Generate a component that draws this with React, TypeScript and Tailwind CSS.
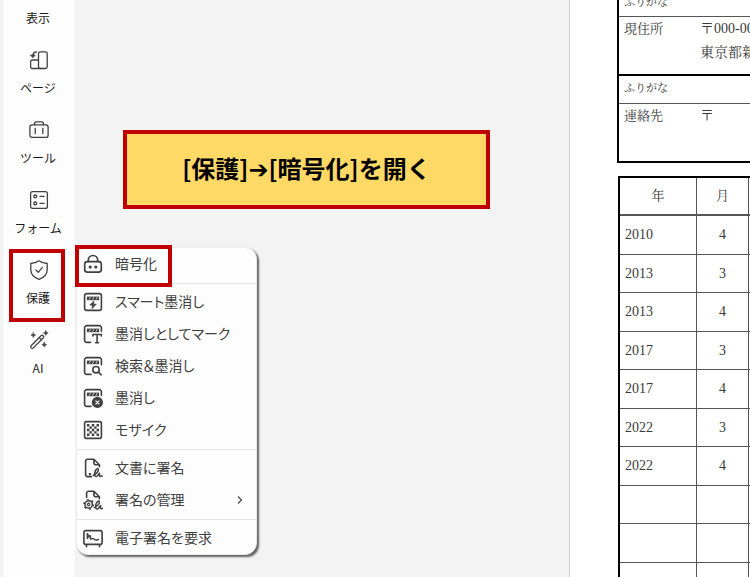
import type { ReactNode } from "react";

/* ---------- icon frames ---------- */

function Icon({ children, weight = 1.3 }: { children: ReactNode; weight?: number }) {
  return (
    <svg
      aria-hidden="true"
      className="size-5 shrink-0"
      viewBox="0 0 20 20"
      fill="none"
      stroke="currentColor"
      strokeWidth={weight}
      strokeLinecap="round"
      strokeLinejoin="round"
    >
      {children}
    </svg>
  );
}

const PageIcon = () => (
  <Icon>
    <rect x="9.5" y="1.8" width="8.7" height="16.7" rx="1.8" />
    <path d="M9.5 10H3.4a1.8 1.8 0 0 0-1.8 1.8v4.9a1.8 1.8 0 0 0 1.800 1.800h7.900" />
    <path d="M7.400 2C5.300 2 3.900 3.200 3.900 6" />
    <path d="M1.800 5h4.400L4 7.600Z" fill="currentColor" strokeWidth="0.8" />
  </Icon>
);

const ToolIcon = () => (
  <Icon>
    <rect x="0.9" y="4.8" width="18.2" height="12.6" rx="2.2" />
    <path d="M5.6 4.8V3.4a1.6 1.6 0 0 1 1.6-1.6h5.6a1.6 1.6 0 0 1 1.6 1.6v1.4M6.2 8.5v5M13.8 8.5v5" />
  </Icon>
);

const FormIcon = () => (
  <Icon>
    <rect x="1.6" y="1.6" width="16.8" height="16.8" rx="2" />
    <circle cx="6.2" cy="6.4" r="1.4" />
    <circle cx="6.2" cy="13.4" r="1.4" />
    <path d="M11 6.4h4M11 13.4h4" />
  </Icon>
);

const ShieldIcon = () => (
  <Icon>
    <path d="M10 .8c2.2 1.700 5 2.600 8.200 2.700v6.200c0 4.400-3 7.700-8.200 9.700-5.200-2-8.200-5.300-8.200-9.700V3.500C5 3.400 7.800 2.500 10 .8Z" />
    <path d="m6.800 9.900 2.400 2.400 4.200-4.900" />
  </Icon>
);

const WandIcon = () => (
  <Icon>
    <path d="m2.100 15.700 9.900-9.900a1.500 1.500 0 0 1 2.200 2.200l-9.900 9.900a1.500 1.500 0 0 1-2.200-2.200ZM10.200 7.600l2.200 2.200" />
    <path
      d="M4.300 2.700l.7 1.700 1.700.7-1.700.7-.7 1.700-.7-1.700-1.700-.7 1.700-.7ZM16.800.6l.7 1.700 1.700.7-1.700.7-.7 1.700-.7-1.700-1.700-.7 1.700-.7ZM15.300 12.300l.7 1.700 1.700.7-1.700.7-.7 1.700-.7-1.700-1.700-.7 1.700-.7Z"
      fill="currentColor"
      strokeWidth="0.6"
    />
  </Icon>
);

const LockIcon = () => (
  <Icon weight={1.7}>
    <rect x="1.700" y="7.600" width="16.600" height="10.600" rx="2.600" />
    <path d="M5.300 7.400V6.200a4.700 4.700 0 0 1 9.400 0v1.200" />
    <circle cx="7.200" cy="13" r="1.600" fill="currentColor" stroke="none" />
    <circle cx="12.800" cy="13" r="1.600" fill="currentColor" stroke="none" />
  </Icon>
);

const RedactBar = () => (
  <>
    <path d="M3.900 4.600h12.200v3.600H3.900Z" fill="currentColor" stroke="none" />
    <path d="M7.300 5.400 6.300 7.400M10.700 5.400 9.700 7.400M14.100 5.400 13.100 7.400" stroke="#fdfdfd" strokeWidth="0.700" />
  </>
);

const SmartRedactIcon = () => (
  <Icon weight={1.600}>
    <rect x="1.600" y="1.600" width="16.800" height="16.800" rx="2.200" />
    <RedactBar />
    <path d="M10.600 9.300 6.900 13h2.600l-.5 3.600 4.200-4.400h-2.600Z" fill="currentColor" strokeWidth="0.800" />
  </Icon>
);

const MarkRedactIcon = () => (
  <Icon weight={1.600}>
    <path d="M7.500 18.400H3.800a2.200 2.200 0 0 1-2.200-2.200V3.800a2.200 2.200 0 0 1 2.200-2.200h12.400a2.200 2.200 0 0 1 2.200 2.200v3.400" />
    <RedactBar />
    <path d="M9.900 12v-1.500h8.400V12M14.100 10.500v8.300M12.600 18.800h3" />
  </Icon>
);

const SearchRedactIcon = () => (
  <Icon weight={1.600}>
    <path d="M8 18.400H3.800a2.200 2.200 0 0 1-2.200-2.200V3.800a2.200 2.200 0 0 1 2.200-2.200h12.400a2.200 2.200 0 0 1 2.200 2.200v5" />
    <RedactBar />
    <circle cx="13" cy="13.700" r="3.200" />
    <path d="m15.500 16.200 2.700 2.600" />
  </Icon>
);

const ApplyRedactIcon = () => (
  <Icon weight={1.600}>
    <path d="M8 18.400H3.800a2.200 2.200 0 0 1-2.200-2.200V3.800a2.200 2.200 0 0 1 2.200-2.200h12.400a2.200 2.200 0 0 1 2.200 2.200v3.700" />
    <RedactBar />
    <circle cx="14.400" cy="14.400" r="5.600" fill="currentColor" stroke="none" />
    <path d="m12.800 12.800 3.200 3.200M16 12.800l-3.200 3.200" stroke="#fdfdfd" strokeWidth="1.100" />
  </Icon>
);

const MosaicIcon = () => (
  <Icon weight={1.600}>
    <rect x="1.600" y="1.600" width="16.800" height="16.800" rx="2" />
    <path
      d="M4 4h2.400v2.400H4ZM8.800 4h2.400v2.400H8.800ZM13.600 4H16v2.400h-2.400ZM6.400 6.400h2.400v2.400H6.400ZM11.200 6.400h2.400v2.400h-2.400ZM4 8.800h2.400v2.400H4ZM8.800 8.800h2.400v2.400H8.800ZM13.600 8.800H16v2.400h-2.400ZM6.400 11.200h2.400v2.400H6.400ZM11.200 11.200h2.400v2.400h-2.400ZM4 13.600h2.400V16H4ZM8.800 13.600h2.400V16H8.800ZM13.600 13.600H16V16h-2.400Z"
      fill="currentColor"
      stroke="none"
    />
  </Icon>
);

const Scribble = () => (
  <path
    d="M10.300 17.200c2.700-1 5.600-4.300 5-6-.6-1.500-2.900.2-3.500 3.200-.5 2.600.1 4.400 1.500 4.200 1.500-.2 2.200-2.900 3.300-3.400-.3 1.500-.5 3.200.5 3.200.9 0 1.100-1.100 2.100-.4"
    strokeWidth="1.500"
  />
);

const SignDocIcon = () => (
  <Icon weight={1.600}>
    <path d="M8.600 18.600H4.600a2 2 0 0 1-2-2V3.200a2 2 0 0 1 2-2h6.300L16.400 6.800v2M10.900 1.400v3.400a2 2 0 0 0 2 2h3.500" />
    <path d="M5.800 15h2.200v2.200H5.800Z" fill="currentColor" stroke="none" />
    <Scribble />
  </Icon>
);

const ManageSignIcon = () => (
  <Icon weight={1.600}>
    <path d="M3.600 7.500V3.200a2 2 0 0 1 2-2h5.300l5.500 5.600v2M10.900 1.400v3.400a2 2 0 0 0 2 2h3.500" />
    <circle cx="5.700" cy="14.400" r="3.700" strokeWidth="1.500" />
    <circle cx="5.700" cy="14.400" r="1.200" strokeWidth="1.200" />
    <circle cx="5.700" cy="14.400" r="4.800" strokeWidth="1.300" strokeDasharray="2 3.027" strokeLinecap="butt" />
    <g transform="translate(1 .4)">
      <Scribble />
    </g>
  </Icon>
);

const RequestSignIcon = () => (
  <Icon weight={1.600}>
    <rect x="0.900" y="2.600" width="18.200" height="13.800" rx="2" />
    <path d="M3.500 18.700v-1.900M16.500 18.700v-1.900" />
    <path d="M4.300 5.800v4.500c1.600-2.700 3.400-3.200 3.200-1.800-.2 1.500-.6 2.700.4 2.500 1-.2 1.500-1.100 2.200-.5.900.9 2.600 2.600 5.300.8" strokeWidth="1.400" />
    <path d="m4.300 6.200 2 1.500" strokeWidth="1.400" />
  </Icon>
);

/* ---------- data ---------- */

const navItems = [
  { label: "ページ", icon: <PageIcon /> },
  { label: "ツール", icon: <ToolIcon /> },
  { label: "フォーム", icon: <FormIcon /> },
  { label: "保護", icon: <ShieldIcon />, open: true },
  { label: "AI", icon: <WandIcon /> },
];

type MenuEntry = { label: string; icon: ReactNode; marked?: boolean; submenu?: boolean };

const menuGroups: MenuEntry[][] = [
  [{ label: "暗号化", icon: <LockIcon />, marked: true }],
  [
    { label: "スマート墨消し", icon: <SmartRedactIcon /> },
    { label: "墨消しとしてマーク", icon: <MarkRedactIcon /> },
    { label: "検索＆墨消し", icon: <SearchRedactIcon /> },
    { label: "墨消し", icon: <ApplyRedactIcon /> },
    { label: "モザイク", icon: <MosaicIcon /> },
  ],
  [
    { label: "文書に署名", icon: <SignDocIcon /> },
    { label: "署名の管理", icon: <ManageSignIcon />, submenu: true },
  ],
  [{ label: "電子署名を要求", icon: <RequestSignIcon /> }],
];

const history = [
  ["2010", "4"],
  ["2013", "3"],
  ["2013", "4"],
  ["2017", "3"],
  ["2017", "4"],
  ["2022", "3"],
  ["2022", "4"],
  ["", ""],
  ["", ""],
  ["", ""],
];

/* ---------- parts ---------- */

function ProtectMenu() {
  return (
    <div
      role="menu"
      aria-label="保護"
      className="absolute top-0.5 left-[73px] z-10 w-[181px] rounded-[12px] border border-[#ececec] bg-[#fdfdfd] shadow-[2px_2px_2px_rgba(0,0,0,0.6)]"
    >
      {menuGroups.map((group, i) => (
        <div
          key={i}
          role="group"
          className={i > 0 ? "mt-[3px] border-t border-[#e3e3e3] pt-[2px]" : ""}
        >
          {group.map((entry) => (
            <button
              key={entry.label}
              type="button"
              role="menuitem"
              className="relative flex h-8 w-full items-center gap-3 pr-3 pl-1.5 text-left text-[14px] text-[#404040] [font-feature-settings:'palt']"
            >
              {entry.icon}
              <span className="flex-1 pb-0.5 whitespace-nowrap">{entry.label}</span>
              {entry.submenu && (
                <svg aria-hidden="true" className="h-2.5 w-2" viewBox="0 0 8 10" fill="none" stroke="currentColor" strokeWidth="1.1">
                  <path d="m2 1.500 3.500 3.500L2 8.500" />
                </svg>
              )}
              {entry.marked && (
                <span className="pointer-events-none absolute -top-[3px] -left-0.5 h-[42px] w-[97px] border-4 border-[#c00000]" />
              )}
            </button>
          ))}
        </div>
      ))}
    </div>
  );
}

function Sidebar() {
  return (
    <nav className="z-10 w-[72px] shrink-0 bg-[#fdfdfd] text-[12px] leading-4 text-[#1a1a1a]">
      <ul>
        <li className="h-[35px]">
          <button type="button" className="w-full pt-2.5 pr-0.5 text-center">
            表示
          </button>
        </li>
        {navItems.map((item) => (
          <li key={item.label} className="relative h-[70px]">
            <button type="button" className="flex w-full flex-col items-center gap-2.5 pt-[15px]">
              <span className="text-[#404040]">{item.icon}</span>
              <span className="pr-0.5">{item.label}</span>
            </button>
            {item.open && (
              <>
                <span className="pointer-events-none absolute top-1 left-1.5 h-[73px] w-14 border-4 border-[#c00000]" />
                <ProtectMenu />
              </>
            )}
          </li>
        ))}
      </ul>
    </nav>
  );
}

function ResumeDocument() {
  return (
    <article className="w-[181px] shrink-0 overflow-hidden border-l border-[#c9d2dc] bg-white font-['Liberation_Serif','Noto_Serif_CJK_JP','Noto_Sans_CJK_JP',serif] text-[#3a3a3a]">
      <table className="-mt-3 ml-[47px] w-[600px] table-fixed border-separate border-spacing-0 border-2 border-t-0 border-black text-[13px] leading-6">
        <colgroup>
          <col className="w-[76px]" />
          <col />
        </colgroup>
        <tbody>
          <tr className="h-[29px] text-[11px]">
            <th scope="row" className="border-b border-[#555] pl-[5px] text-left font-normal">ふりがな</th>
            <td className="border-b border-[#555]" />
          </tr>
          <tr className="h-[59px] align-top">
            <th scope="row" className="border-b-2 border-black pl-[5px] text-left font-normal">現住所</th>
            <td className="border-b-2 border-black pl-[5px] text-[14px]">
              〒000-0000
              <br />
              東京都新宿区
            </td>
          </tr>
          <tr className="h-7 align-top text-[11px]">
            <th scope="row" className="border-b border-[#555] pl-[5px] text-left font-normal">ふりがな</th>
            <td className="border-b border-[#555]" />
          </tr>
          <tr className="h-[57px] align-top">
            <th scope="row" className="pl-[5px] text-left font-normal">連絡先</th>
            <td className="pl-[5px] text-[14px]">〒</td>
          </tr>
        </tbody>
      </table>

      <table className="mt-[13px] ml-12 w-[600px] table-fixed border-separate border-spacing-0 border-2 border-black text-[14px] leading-6">
        <colgroup>
          <col className="w-[77px]" />
          <col className="w-[52px]" />
          <col />
        </colgroup>
        <thead>
          <tr className="h-[38px] text-[13px]">
            <th scope="col" className="border-r border-b-2 border-[#555] font-normal">年</th>
            <th scope="col" className="border-r border-b-2 border-[#555] font-normal">月</th>
            <th className="border-b-2 border-[#555]" />
          </tr>
        </thead>
        <tbody>
          {history.map(([year, month], i) => (
            <tr key={i} className="h-[39px] even:h-[38px]">
              <td className="border-r border-b border-[#555] pl-[5px]">{year}</td>
              <td className="border-r border-b border-[#555] text-center">{month}</td>
              <td className="border-b border-[#555]" />
            </tr>
          ))}
        </tbody>
      </table>
    </article>
  );
}

export default function App() {
  return (
    <div className="flex h-screen overflow-hidden bg-[#f3f3f3] pl-[3px] font-['Noto_Sans_CJK_JP',sans-serif]">
      <Sidebar />
      <main className="flex min-w-0 flex-1">
        <div className="min-w-0 flex-1 pt-[130px] pr-[79px] pl-12">
          <p className="border-4 border-[#c00000] bg-[#ffd966] pt-4 pb-5 text-center text-[24px] leading-[35px] font-bold whitespace-nowrap text-black">
            [保護]<span className="font-['DejaVu_Sans'] leading-none">➔</span>[暗号化]を開く
          </p>
        </div>
        <ResumeDocument />
      </main>
    </div>
  );
}
